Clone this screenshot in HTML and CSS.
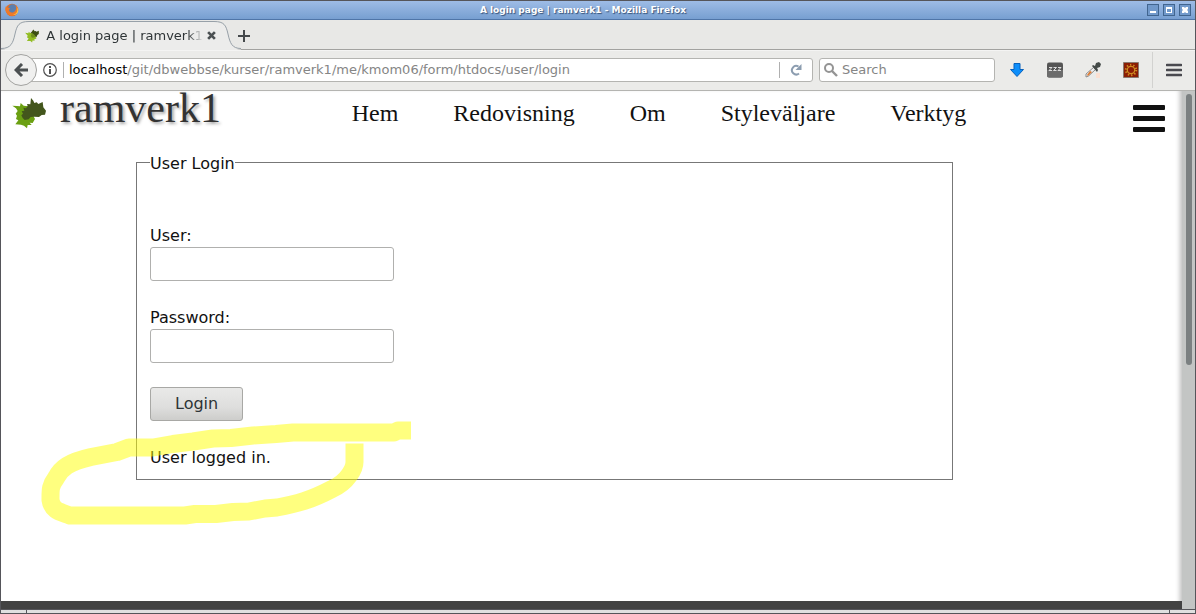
FILE: index.html
```html
<!DOCTYPE html>
<html lang="sv">
<head>
<meta charset="utf-8">
<meta name="viewport" content="width=device-width, initial-scale=1">
<title>A login page | ramverk1</title>
<link rel="stylesheet" href="styles.css">
</head>
<body>
<svg class="defs" aria-hidden="true">
  <symbol id="leaf" viewBox="36 54 105 92">
    <path fill="#6ba012" d="M37 78l14 1 9 1 2-10 9 8 14 2 20 38-7 12-9-1 6 7-12 0-2 10-9-8-9-3-17-1 9-12-7-4 3-10-4-6 6-8-5-8z"/>
    <path fill="#43561c" d="M93 55l7 8 3 7 7-2 5 5 13-6 2 16 8 10-3 12-10 1-8 6-14-1-11 1-6 7-12 2-6-6-4-8 5-5-4-7 8-2-3-9 8 2 5-7-2-6 10 1z"/>
  </symbol>
  <symbol id="leaf-small" viewBox="36 54 105 92">
    <path fill="#93bd25" d="M37 78l22 3 3-10 9 8 24 2 20 37-16 6 4 8-15-1-3 13-12-9-24-1 12-16-12-10 6-10z"/>
    <path fill="#3d4f13" d="M93 55l10 12 7-2 5 6 16-7 0 22-10 7-6 15-9-4-10-14-12-8-10-3 10-10z"/>
    <path fill="#6d8f1c" d="M84 80l14 10 10 14-8 6-16 2-8-12z"/>
  </symbol>
</svg>
<div class="window">
  <header class="titlebar">
    <svg class="firefox" viewBox="0 0 14 14" aria-hidden="true"><circle cx="7" cy="7" r="6.300" fill="#e0702a"/><circle cx="7.500" cy="5.500" r="4.200" fill="#5b7fae"/><path d="M1 3l2 2 2 0-1 2c0 3 4 4 6 1 2-2 1-5 0-6 4 3 4 7 1 9-3 3-8 2-10-2-1-2-1-4 0-6z" fill="#ee7a2a"/><path d="M11 3c3 4 1 8-3 9 3 0 6-2 5-6z" fill="#f9d34d"/></svg>
    <span class="caption">A login page | ramverk1 - Mozilla Firefox</span>
    <div class="winbuttons">
      <button class="winbtn" aria-label="Minimize"><svg viewBox="0 0 12 12"><path d="M3 7h6v2H3z" fill="#fff"/></svg></button>
      <button class="winbtn" aria-label="Maximize"><svg viewBox="0 0 12 12"><path d="M3 3h6v6H3zM4 5v3h4V5z" fill="#fff" fill-rule="evenodd"/></svg></button>
      <button class="winbtn" aria-label="Close"><svg viewBox="0 0 12 12"><path d="M3 3h2l1 1 1-1h2v2L8 6l1 1v2H7L6 8 5 9H3V7l1-1-1-1z" fill="#fff"/></svg></button>
    </div>
  </header>
  <div class="tabs">
    <div class="tab">
      <svg class="tabshape" viewBox="0 0 240 30" aria-hidden="true"><path d="M0 29.500C10 29.500 12 24 14 15 16 6 18 2 28 2H213C223 2 225 6 227 15 229 24 231 29.500 240 29.500V30H0z" fill="#ececeb"/><path d="M0 28.500C10 28.500 12 23 14 14 16 5 18 1.500 28 1.500H213C223 1.500 225 5 227 14 229 23 231 28.500 240 28.500" fill="none" stroke="#97a0a8"/></svg>
      <svg class="favicon" aria-hidden="true"><use href="#leaf-small"/></svg>
      <span class="tabtitle">A login page | ramverk1</span>
      <button class="plain tabclose" aria-label="Close tab"><svg viewBox="0 0 8 8"><path d="M1 1l6 6M7 1L1 7" stroke="#4b5052" stroke-width="2.400"/></svg></button>
    </div>
    <button class="plain newtab" aria-label="New tab"><svg viewBox="0 0 12 12"><path d="M6 0v12M0 6h12" stroke="#45494b" stroke-width="2"/></svg></button>
  </div>
  <div class="toolbar">
    <button class="back" aria-label="Back"><svg viewBox="0 0 14 14"><path d="M8 1L2 7l6 6M2 7h12" fill="none" stroke="#4c5052" stroke-width="3"/></svg></button>
    <div class="urlbar">
      <svg class="info" viewBox="0 0 14 14" aria-hidden="true"><circle cx="7" cy="7" r="6.300" fill="none" stroke="#505050" stroke-width="1.200"/><path d="M6 3h2v2H6zM6 6h2v5H6z" fill="#505050"/></svg>
      <span class="divider"></span>
      <span class="url"><b>localhost</b>/git/dbwebbse/kurser/ramverk1/me/kmom06/form/htdocs/user/login</span>
      <span class="divider"></span>
      <button class="plain reload" aria-label="Reload"><svg viewBox="0 0 12 12"><path d="M8.500 2.500A4.300 4.300 0 1 0 9 9.500" fill="none" stroke="#8c9db0" stroke-width="2"/><path d="M11.500 0v6H5.500z" fill="#8c9db0"/></svg></button>
    </div>
    <label class="search"><svg viewBox="0 0 14 14" aria-hidden="true"><circle cx="5" cy="5" r="4" fill="none" stroke="#949494" stroke-width="2"/><path d="M8 8l5 5" stroke="#949494" stroke-width="2.400"/></svg><input type="search" placeholder="Search" aria-label="Search"></label>
    <div class="addons">
      <button class="plain" aria-label="Downloads"><svg viewBox="0 0 16 16"><path d="M5 1.500h6v6h3.500L8 14.500 1.500 7.500H5z" fill="#0d8efa" stroke="#0761bd"/></svg></button>
      <button class="plain" aria-label="Sleep"><svg viewBox="0 0 16 16"><rect y=".5" width="16" height="15" rx="2" fill="#555"/><path d="M0 8h16v5.500a2 2 0 0 1-2 2H2a2 2 0 0 1-2-2z" fill="#6c6c6c"/><path d="M2 5.500h3L2 8.500h3M6.500 5.500h3l-3 3h3M11 5.500h3l-3 3h3" fill="none" stroke="#ddd"/></svg></button>
      <button class="plain" aria-label="Color picker"><svg viewBox="0 0 16 16"><path d="M11 11h4v5h-4z" fill="#fbe0d2"/><path d="M8.500 5.500l2 2-7 6.500-2.500 1 0-3z" fill="#eee" stroke="#8b8b8b"/><path d="M5 9l2 1-4 4-1-1z" fill="#dd7a32"/><path d="M7 4l1-1 2 1 1-3 3-1 2 2-1 3-3 1 1 2-1 2z" fill="#444a48"/></svg></button>
      <button class="plain" aria-label="Debugger"><svg viewBox="0 0 16 16"><path d="M.5.5h15v15H.5z" fill="#8b1d04" stroke="#8a7a70"/><circle cx="8" cy="8" r="3.700" fill="none" stroke="#cf8b22" stroke-width="1.300"/><circle cx="8" cy="8" r="5.200" fill="none" stroke="#cf8b22" stroke-width="2" stroke-dasharray="1.300 1.970"/></svg></button>
    </div>
    <button class="plain menu" aria-label="Menu"><svg viewBox="0 0 16 14"><path d="M1 2h14M1 7h14M1 12h14" stroke="#4a4a50" stroke-width="2.600" stroke-linecap="round"/></svg></button>
  </div>
  <div class="viewport">
    <div class="page">
      <header class="site">
        <a class="brand" href="#"><svg aria-hidden="true"><use href="#leaf"/></svg><span>ramverk1</span></a>
        <nav class="sitenav"><a href="#">Hem</a><a href="#">Redovisning</a><a href="#">Om</a><a href="#">Styleväljare</a><a href="#">Verktyg</a></nav>
        <button class="plain burger" aria-label="Meny"><i></i><i></i><i></i></button>
      </header>
      <main class="content">
        <form>
          <fieldset>
            <legend>User Login</legend>
            <p class="field"><label for="user">User:</label><input id="user" type="text"></p>
            <p class="field"><label for="password">Password:</label><input id="password" type="password"></p>
            <button class="submit" type="button">Login</button>
            <output>User logged in.</output>
          </fieldset>
        </form>
      </main>
      <footer class="foot"></footer>
      <svg class="marker" viewBox="0 0 380 110" aria-hidden="true"><path d="M370 10.500H357L353 12.500H252L235 14 212 15.500 190 18 172 18.500 152 21.500 132 24 112 27.500H88L76 32 50 37C28 42 20 48 15 58 9 66 9.500 70 9.500 80 11 91 20 92 29 95.500H144L154 94H175L192 92 208 91.500 224 88.500 236 87.500C256 84 270 80 291 69 307 62 313.500 48 313.500 42V23.500"/></svg>
    </div>
    <div class="scrollbar"><div class="thumb"></div></div>
  </div>
  <div class="frame"><i></i></div>
</div>
</body>
</html>
```
FILE: styles.css
```css
* { box-sizing: border-box; }
body { margin: 0; font: 13px/18px "DejaVu Sans", sans-serif; color: #2e3436; }
svg { display: block; }
a { color: inherit; text-decoration: none; }
.defs { display: none; }
.plain { border: 0; background: none; padding: 0; }

.window { display: flex; flex-direction: column; height: 100vh; min-height: 400px; border: 1px solid #55555a; background: #e8e8e6; }

.titlebar { display: flex; align-items: center; height: 19px; padding: 0 4px; background: linear-gradient(#9ebce6, #779fd1); border-bottom: 1px solid #4f75a8; }
.firefox { width: 14px; height: 14px; }
.caption { flex: 1; text-align: center; color: #fff; font: bold 9px/18px "DejaVu Sans", sans-serif; text-shadow: 1px 1px 1px #36537a; }
.winbuttons { display: flex; gap: 4px; }
.winbtn { width: 12px; height: 12px; padding: 0; border: 0; background: #7199cb; outline: 1px solid #41658f; outline-offset: -1px; }
.winbtn svg { width: 12px; height: 12px; }

.tabs { display: flex; height: 30px; border-bottom: 1px solid #a2a2a0; }
.tab { position: relative; display: flex; align-items: center; width: 237px; padding: 2px 22px 0 24px; flex: none; }
.tabshape { position: absolute; left: 0; top: 0; width: 240px; height: 30px; }
.favicon { position: relative; width: 16px; height: 16px; margin-right: 6px; }
.tabtitle { position: relative; flex: 1; white-space: nowrap; mask-image: linear-gradient(90deg, #000 90%, transparent); margin-right: 4px; }
.tabclose { position: relative; }
.tabclose svg { width: 9px; height: 9px; }
.newtab { padding-top: 2px; }
.newtab svg { width: 12px; height: 12px; }

.toolbar { display: flex; align-items: center; height: 41px; padding: 0 13px 2px 4px; background: #ebebe9; border-bottom: 1px solid #b4b4b1; border-top: 1px solid #f4f4f3; }
.back { position: relative; z-index: 1; display: grid; place-items: center; width: 32px; height: 32px; margin-right: -10px; padding: 0; border: 1px solid #a2a2a0; border-radius: 50%; background: #f0f0ef; }
.back svg { width: 14px; height: 14px; }
.urlbar { flex: 1; display: flex; align-items: center; height: 24px; padding-left: 15px; background: #fff; border: 1px solid #b4b4b1; border-radius: 3px; }
.info { width: 14px; height: 14px; margin-right: 6px; }
.divider { width: 1px; height: 16px; background: #b0b0b0; }
.url { flex: 1; padding-left: 5px; color: #858585; white-space: nowrap; overflow: hidden; }
.url b { font-weight: normal; color: #000; }
.reload { width: 32px; display: grid; place-items: center; }
.reload svg { width: 12px; height: 12px; }
.search { display: flex; align-items: center; width: 176px; height: 24px; margin-left: 6px; padding-left: 4px; gap: 4px; background: #fff; border: 1px solid #b4b4b1; border-radius: 3px; }
.search svg { width: 14px; height: 14px; flex: none; }
.search input { min-width: 0; flex: 1; border: 0; padding: 0; background: none; font: inherit; outline: 0; }
.search input::placeholder { color: #858585; }
.addons { display: flex; gap: 22px; margin: 0 13px 0 14px; }
.addons svg { width: 16px; height: 16px; }
.menu { height: 36px; padding-left: 13px; border-left: 1px solid #d2d2d0; }
.menu svg { width: 16px; height: 14px; }

.viewport { flex: 1; min-height: 0; display: flex; background: #fff; }
.page { position: relative; flex: 1; display: flex; flex-direction: column; color: #111; box-shadow: inset -5px 0 5px -3px #bbb; }
.site { display: flex; align-items: flex-start; padding: 0 17px 0 11px; font-family: "Liberation Serif", serif; }
.brand { display: flex; gap: 13px; font-size: 42px; line-height: 34px; color: #333; text-shadow: 2px 2px 3px #aaa; }
.brand svg { width: 35px; height: 32px; margin-top: 6px; }
.sitenav { flex: 1; display: flex; justify-content: center; gap: 55px; padding: 8px 36px 0 0; font-size: 24px; line-height: 28px; }
.burger { display: grid; gap: 6px; padding-top: 14px; }
.burger i { width: 32px; height: 5px; border-radius: 1px; background: #111; }
.content { flex: 1; padding: 17px 229px 0 135px; font: 16px/22px "DejaVu Sans", sans-serif; }
fieldset { margin: 0; padding: 48px 13px 10px; border: 1px solid #777; }
legend { padding: 4px 0 0; }
.field { display: grid; margin: 0 0 24px; }
.field label { padding-top: 2px; line-height: 22px; margin-bottom: 0; }
.field input { width: 244px; height: 34px; padding: 0 8px; border: 1px solid #b0b0ae; border-radius: 3px; background: #fff; font: inherit; }
.submit { display: block; height: 34px; padding: 0 24px; border: 1px solid #a8a8a5; border-radius: 3px; background: linear-gradient(#e9e9e8, #dededd 60%, #cdcdcb); color: #2e3436; font: inherit; }
output { display: block; margin-top: 26px; }
.foot { height: 8px; background: #424242; }
.marker { position: absolute; left: 40px; top: 329px; width: 380px; height: 110px; fill: none; stroke: rgba(255, 255, 0, .5); stroke-width: 18px; stroke-linejoin: round; pointer-events: none; }
.scrollbar { width: 13px; padding: 3px 3px 3px 4px; background: #c3c5c4; }
.thumb { width: 6px; height: 271px; border-radius: 3px; background: #7b8081; }
.frame { display: flex; justify-content: space-between; height: 4px; padding: 0 25px; border-top: 1px solid #55555a; background: #e0e0e0; }
.frame::before { content: ""; width: 1px; background: #55555a; }
.frame i { width: 1px; background: #55555a; }
```
